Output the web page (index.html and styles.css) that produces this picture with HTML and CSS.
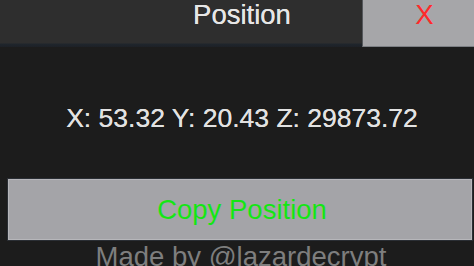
FILE: index.html
```html
<!DOCTYPE html>
<html>
<head>
<meta charset="utf-8">
<link rel="stylesheet" href="styles.css">
</head>
<body>
<div class="header">
  <div class="title">Position</div>
  <div class="close">X</div>
</div>
<div class="main">
  <div class="coords">X: 53.32 Y: 20.43 Z: 29873.72</div>
  <div class="copy">Copy Position</div>
  <div class="credit">Made by @lazardecrypt</div>
</div>
</body>
</html>
```
FILE: styles.css
```css
html, body {
  margin: 0;
  padding: 0;
  background: #1c1c1c;
  overflow: hidden;
  width: 474px;
  height: 266px;
}
body {
  font-family: "Liberation Sans", Arial, sans-serif;
}
.header {
  display: flex;
  height: 47px;
  background: linear-gradient(#2e2e2e 0, #2e2e2e 43px, #1f252c 44px, #1d2127 47px);
}
.title {
  flex: 1;
  padding-left: 122px;
  text-align: center;
  color: #e6e6e6;
  font-size: 27.5px;
  line-height: 28px;
  margin-top: 1px;
  text-shadow: 0 0 0.5px #e6e6e6;
}
.close {
  width: 99px;
  height: 45px;
  padding-left: 12px;
  background: #a6a6a9;
  border-left: 1px solid #55585c;
  border-bottom: 1px solid #7c7f84;
  color: #ff2a2a;
  text-align: center;
  font-size: 27.5px;
  line-height: 28px;
  padding-top: 1px;
  box-sizing: content-box;
}
.main {
  padding: 55px 2px 0 8px;
}
.coords {
  color: #e2e2e2;
  font-size: 26.5px;
  line-height: 32px;
  text-align: center;
  padding-left: 4px;
  margin-bottom: 45px;
  text-shadow: 0 0 0.5px #e2e2e2;
}
.copy {
  height: 59px;
  background: #a4a4a8;
  border: 1px solid #b6b6ba;
  box-shadow: 0 0 0 1px #2a2e34;
  color: #14e614;
  font-size: 27.5px;
  line-height: 59px;
  text-align: center;
  padding-left: 4px;
}
.credit {
  color: #7e7e7e;
  font-size: 27.5px;
  line-height: 32px;
  text-align: center;
  padding-left: 2px;
  margin-top: 1px;
}
```
